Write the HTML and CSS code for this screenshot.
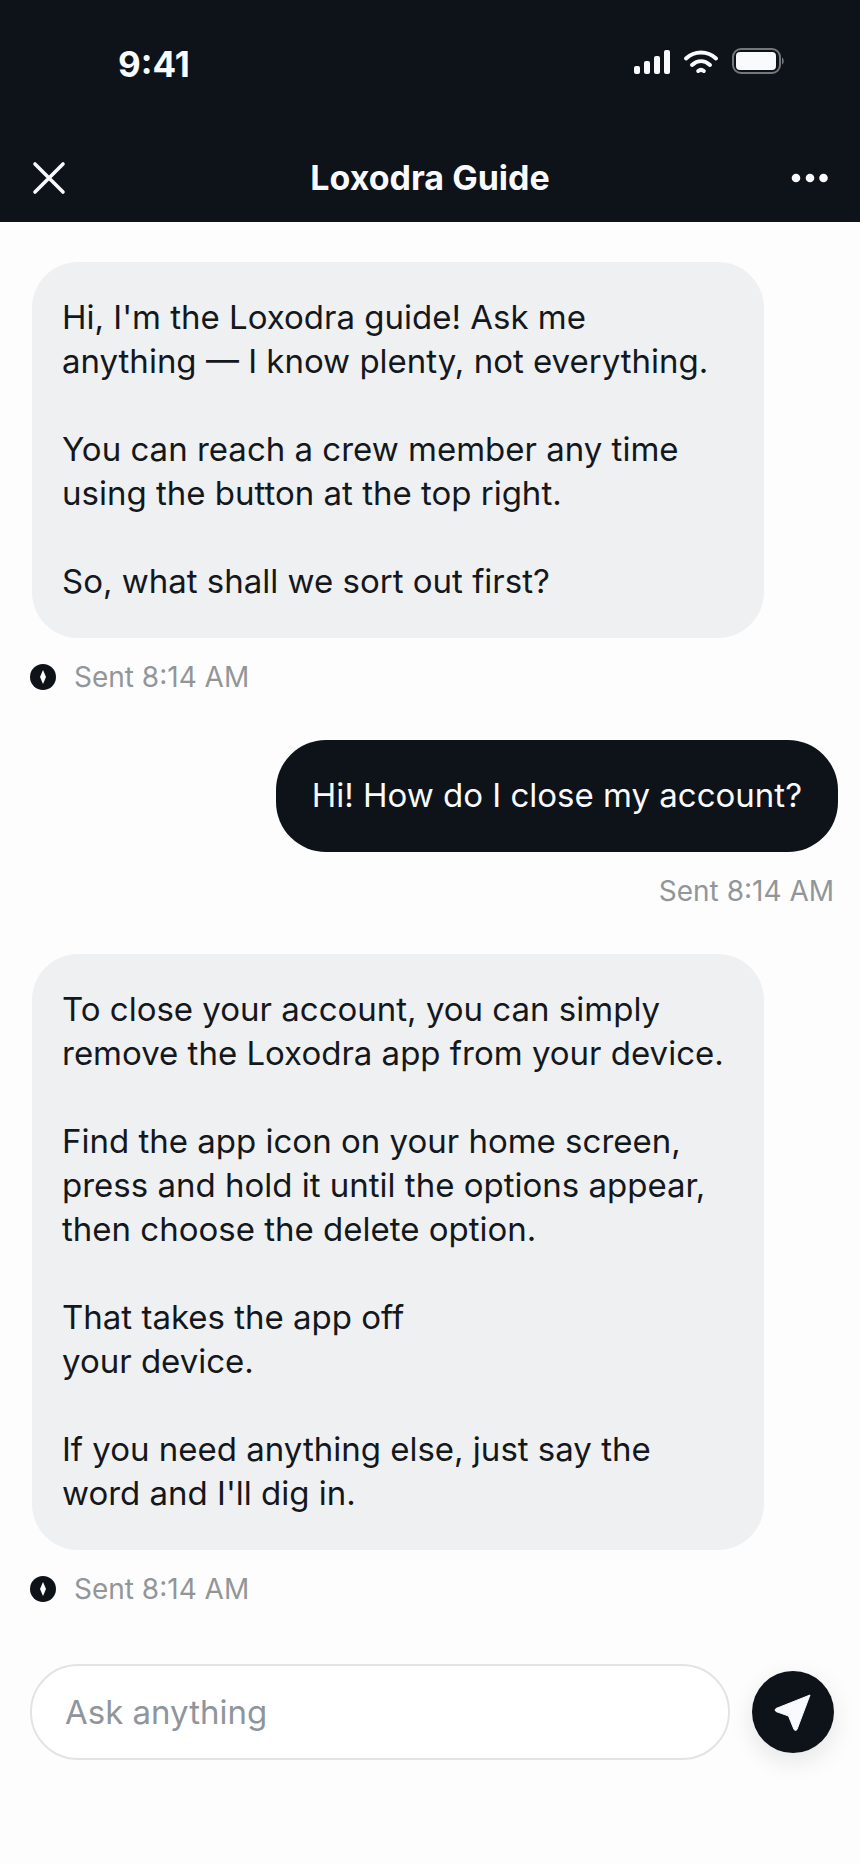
FILE: index.html
```html
<!DOCTYPE html>
<html lang="en">
<head>
    <meta charset="UTF-8">
    <meta name="viewport" content="width=device-width, initial-scale=1.0">
    <title>Loxodra Guide</title>
    <link rel="stylesheet" href="styles.css">
</head>
<body>
    <div class="app">
        <header class="header">
            <div class="status-bar">
                <span class="time">9:41</span>
                <svg class="status-icons" width="150" height="26" viewBox="0 0 150 26" aria-hidden="true">
                    <!-- signal -->
                    <g fill="#f8fafd">
                        <rect x="0" y="18" width="6" height="8" rx="2"/>
                        <rect x="10" y="13" width="6" height="13" rx="2"/>
                        <rect x="20" y="8" width="6" height="18" rx="2"/>
                        <rect x="30" y="2" width="6" height="24" rx="2"/>
                    </g>
                    <!-- wifi -->
                    <g fill="none" stroke="#f8fafd" stroke-width="4" stroke-linecap="round">
                        <path d="M52 10.500C60.500 2.500 73.500 2.500 82 10.500"/>
                        <path d="M58 17C63.500 12 70.500 12 76 17"/>
                        <path d="M64.200 23C66 21.600 68 21.600 69.800 23"/>
                    </g>
                    <!-- battery -->
                    <rect x="99" y="1" width="47" height="24" rx="8" fill="none" stroke="#74777b" stroke-width="2"/>
                    <rect x="102" y="4" width="40" height="18" rx="4" fill="#f8fafd"/>
                    <path d="M148 9.500C150.300 10.500 150.300 15.500 148 16.500Z" fill="#74777b"/>
                </svg>
            </div>
            <div class="nav">
                <button class="nav-button" type="button" aria-label="Close">
                    <svg width="34" height="34" viewBox="0 0 34 34" aria-hidden="true">
                        <path d="M3 3L31 31M31 3L3 31" stroke="#f8fafd" stroke-width="3.600" stroke-linecap="round"/>
                    </svg>
                </button>
                <h1>Loxodra Guide</h1>
                <button class="nav-button nav-more" type="button" aria-label="More options">
                    <svg width="38" height="10" viewBox="0 0 38 10" fill="#f8fafd" aria-hidden="true">
                        <circle cx="6" cy="5" r="4.300"/>
                        <circle cx="20" cy="5" r="4.300"/>
                        <circle cx="33.500" cy="5" r="4.300"/>
                    </svg>
                </button>
            </div>
        </header>

        <main class="chat">
            <div class="message">
                <div class="bubble">
                    <p>Hi, I'm the Loxodra guide! Ask me<br>anything — I know plenty, not everything.</p>
                    <p>You can reach a crew member any time<br>using the button at the top right.</p>
                    <p>So, what shall we sort out first?</p>
                </div>
                <div class="meta">
                    <svg class="avatar" width="26" height="26" viewBox="0 0 26 26" aria-hidden="true">
                        <circle cx="13" cy="13" r="13" fill="#0e1219"/>
                        <path d="M13 6L16 13L13 20L10 13Z" fill="#fff"/>
                    </svg>
                    <span>Sent 8:14 AM</span>
                </div>
            </div>

            <div class="message message-own">
                <div class="bubble">
                    <p>Hi! How do I close my account?</p>
                </div>
                <div class="meta">
                    <span>Sent 8:14 AM</span>
                </div>
            </div>

            <div class="message">
                <div class="bubble">
                    <p>To close your account, you can simply<br>remove the Loxodra app from your device.</p>
                    <p>Find the app icon on your home screen,<br>press and hold it until the options appear,<br>then choose the delete option.</p>
                    <p>That takes the app off<br>your device.</p>
                    <p>If you need anything else, just say the<br>word and I'll dig in.</p>
                </div>
                <div class="meta">
                    <svg class="avatar" width="26" height="26" viewBox="0 0 26 26" aria-hidden="true">
                        <circle cx="13" cy="13" r="13" fill="#0e1219"/>
                        <path d="M13 6L16 13L13 20L10 13Z" fill="#fff"/>
                    </svg>
                    <span>Sent 8:14 AM</span>
                </div>
            </div>
        </main>

        <form class="composer">
            <input class="composer-input" type="text" placeholder="Ask anything" aria-label="Ask anything">
            <button class="send" type="button" aria-label="Send">
                <svg width="82" height="82" viewBox="0 0 82 82" aria-hidden="true">
                    <path d="M58 24L24 37.500Q22 39 24 40.500L36.500 45L42 58.500Q43.500 60.500 45 58.500Z" fill="#f8fafd" stroke="#f8fafd" stroke-width="1" stroke-linejoin="round"/>
                </svg>
            </button>
        </form>
    </div>
</body>
</html>
```
FILE: styles.css
```css
* {
    box-sizing: border-box;
}

body {
    margin: 0;
    font-family: Inter, "Liberation Sans", sans-serif;
    font-size: 33px;
    line-height: 44px;
    color: #14181c;
    background-color: #fdfdfd;
}

.app {
    display: flex;
    flex-direction: column;
    min-height: 100vh;
}

.header {
    background-color: #0e1219;
    color: #f8fafd;
}

.status-bar {
    display: flex;
    justify-content: space-between;
    align-items: center;
    padding: 42px 76px 0 118px;
}

.time {
    font-size: 35px;
    font-weight: 700;
}

.status-icons {
    margin-bottom: 6px;
}

.nav {
    display: flex;
    justify-content: space-between;
    align-items: center;
    padding: 70px 32px 22px;
}

h1 {
    margin: 0;
    font-size: 34px;
    font-weight: 700;
}

.nav-button {
    display: flex;
    align-items: center;
    width: 44px;
    height: 44px;
    padding: 0;
    border: none;
    background: none;
    cursor: pointer;
}

.nav-button svg {
    flex: none;
}

.nav-more {
    justify-content: flex-end;
}

.chat {
    display: flex;
    flex-direction: column;
    gap: 47px;
    padding: 40px 22px 0 32px;
}

.message {
    display: flex;
    flex-direction: column;
}

.bubble {
    margin-right: 74px;
    padding: 33px 30px 35px;
    border-radius: 46px;
    background-color: #eff0f2;
}

.bubble p {
    margin: 0;
}

.bubble p + p {
    margin-top: 44px;
}

.meta {
    display: flex;
    align-items: center;
    gap: 18px;
    margin: 23px 0 0 -2px;
    font-size: 28px;
    line-height: 32px;
    color: #929699;
}

.message-own {
    align-items: flex-end;
}

.message-own .bubble {
    margin-right: 0;
    padding: 33px 36px 35px;
    border-radius: 50px;
    background-color: #0e1219;
    color: #f8fafd;
}

.message-own .meta {
    margin-right: 4px;
}

.composer {
    display: flex;
    align-items: center;
    gap: 22px;
    padding: 59px 26px 104px 30px;
}

.composer-input {
    flex: 1;
    min-width: 0;
    height: 96px;
    padding: 0 33px;
    border: 2px solid #e2e4e4;
    border-radius: 48px;
    background-color: #fff;
    font: inherit;
    color: inherit;
}

.composer-input::placeholder {
    color: #8f959b;
    opacity: 1;
}

.send {
    flex: none;
    width: 82px;
    height: 82px;
    padding: 0;
    border: none;
    border-radius: 50%;
    background-color: #0e1219;
    box-shadow: 0 8px 24px rgba(14, 18, 25, 0.1);
    cursor: pointer;
}

.send svg {
    display: block;
}
```
